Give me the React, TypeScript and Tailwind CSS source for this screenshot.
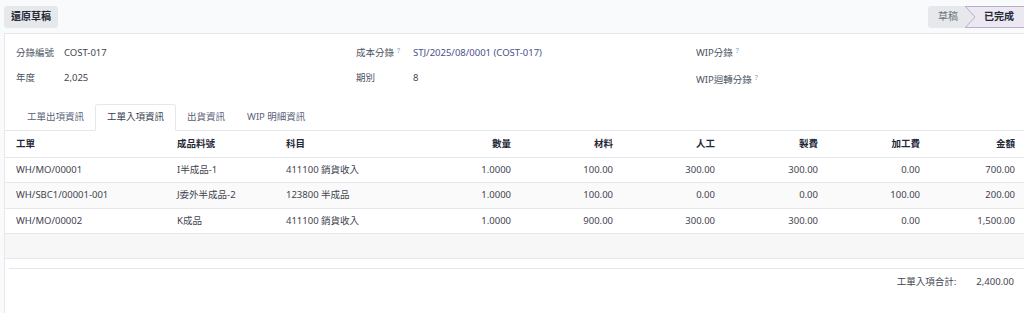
const rows = [
  ["WH/MO/00001", "I半成品-1", "411100 銷貨收入", "1.0000", "100.00", "300.00", "300.00", "0.00", "700.00"],
  ["WH/SBC1/00001-001", "J委外半成品-2", "123800 半成品", "1.0000", "100.00", "0.00", "0.00", "100.00", "200.00"],
  ["WH/MO/00002", "K成品", "411100 銷貨收入", "1.0000", "900.00", "300.00", "300.00", "0.00", "1,500.00"],
];

const numHeads = ["數量", "材料", "人工", "製費", "加工費", "金額"];

function Help() {
  return <sup className="ml-[3px] text-[7px] text-[#7a9fc4]">?</sup>;
}

export default function App() {
  return (
    <div
      className="h-[313px] w-[1024px] overflow-hidden bg-[#f9fafb] text-[9.5px] text-[#3f4450]"
      style={{ fontFamily: '"Noto Sans", "Noto Sans CJK TC", sans-serif' }}
    >
      <div className="flex h-[33px] items-center justify-between pl-1">
        <button className="h-[22px] rounded-[3px] bg-[#e6e8eb] px-[7px] text-[10px] font-semibold text-[#1f2937]">
          還原草稿
        </button>
        <div className="flex h-[22px] items-stretch">
          <div className="flex items-center rounded-l-[3px] bg-[#e6e8eb] pl-[10px] pr-[8px] text-[10px] text-[#6b7280]">草稿</div>
          <div className="relative flex items-center border-y border-[#b9aecb] bg-[#ece8f2] pl-[18px] pr-[10px] text-[10px] font-semibold text-[#1f2937]">
            <svg className="absolute -left-[1px] top-[-1px]" width="10" height="22" viewBox="0 0 10 22">
              <polygon points="0,0 0,22 10,11" fill="#e6e8eb" />
              <polyline points="0,0 10,11 0,22" fill="none" stroke="#b9aecb" strokeWidth="1" />
            </svg>
            已完成
          </div>
        </div>
      </div>

      <div className="ml-1 h-full border-l border-t border-[#e5e7eb] bg-white">
        <div className="grid grid-cols-[340px_340px_1fr] pl-[11px] pt-[10px]">
          <div className="flex flex-col">
            <div className="flex h-[19px] items-center">
              <span className="w-[48px] text-[#4b5563]">分錄編號</span>
              <span>COST-017</span>
            </div>
            <div className="mt-[6px] flex h-[19px] items-center">
              <span className="w-[48px] text-[#4b5563]">年度</span>
              <span>2,025</span>
            </div>
          </div>
          <div className="flex flex-col">
            <div className="flex h-[19px] items-center">
              <span className="w-[57px] text-[#4b5563]">成本分錄<Help /></span>
              <span className="text-[#4c4f8a]">STJ/2025/08/0001 (COST-017)</span>
            </div>
            <div className="mt-[6px] flex h-[19px] items-center">
              <span className="w-[57px] text-[#4b5563]">期別</span>
              <span>8</span>
            </div>
          </div>
          <div className="flex flex-col">
            <div className="flex h-[19px] items-center">
              <span className="text-[#4b5563]">WIP分錄<Help /></span>
            </div>
            <div className="mt-[8px] flex h-[19px] items-center">
              <span className="text-[#4b5563]">WIP迴轉分錄<Help /></span>
            </div>
          </div>
        </div>

        <div className="mt-[14px] flex h-[27px] items-end border-b border-[#e5e7eb] pl-[11px]">
          <div className="flex h-[26px] items-center px-[11px] text-[#5b5f7a]">工單出項資訊</div>
          <div className="-mb-px flex h-[27px] items-center rounded-t-[3px] border border-b-white border-[#e5e7eb] bg-white px-[11px] text-[#374151]">
            工單入項資訊
          </div>
          <div className="flex h-[26px] items-center px-[11px] text-[#5b5f7a]">出貨資訊</div>
          <div className="flex h-[26px] items-center px-[11px] text-[#5b5f7a]">WIP 明細資訊</div>
        </div>

        <table className="w-[1020px] table-fixed border-collapse">
          <colgroup>
            <col className="w-[161px]" />
            <col className="w-[109px]" />
            <col className="w-[144px]" />
            <col className="w-[102px]" />
            <col className="w-[102px]" />
            <col className="w-[102px]" />
            <col className="w-[103px]" />
            <col className="w-[102px]" />
            <col className="w-[95px]" />
          </colgroup>
          <thead>
            <tr className="h-[26px] border-b border-[#e5e7eb]">
              <th className="pl-[11px] text-left font-semibold text-[#1f2937]">工單</th>
              <th className="pl-[11px] text-left font-semibold text-[#1f2937]">成品料號</th>
              <th className="pl-[11px] text-left font-semibold text-[#1f2937]">科目</th>
              {numHeads.map((h) => (
                <th key={h} className="pr-[10px] text-right font-semibold text-[#1f2937]">{h}</th>
              ))}
            </tr>
          </thead>
          <tbody>
            {rows.map((r, i) => (
              <tr key={i} className={`h-[25.5px] border-b border-[#e5e7eb] ${i === 1 ? "bg-[#fafafa]" : ""}`}>
                {r.map((c, j) => (
                  <td key={j} className={j < 3 ? "pl-[11px] text-left" : "pr-[10px] text-right"}>{c}</td>
                ))}
              </tr>
            ))}
            <tr className="h-[25px] border-b border-[#e5e7eb] bg-[#f7f7f7]">
              <td colSpan={9}></td>
            </tr>
          </tbody>
        </table>

        <div className="ml-[4px] mt-[9px] border-t border-[#e5e7eb]"></div>
        <div className="flex justify-end pr-[10px] pt-[6px]">
          <span className="mr-[20px]">工單入項合計:</span>
          <span>2,400.00</span>
        </div>
      </div>
    </div>
  );
}
